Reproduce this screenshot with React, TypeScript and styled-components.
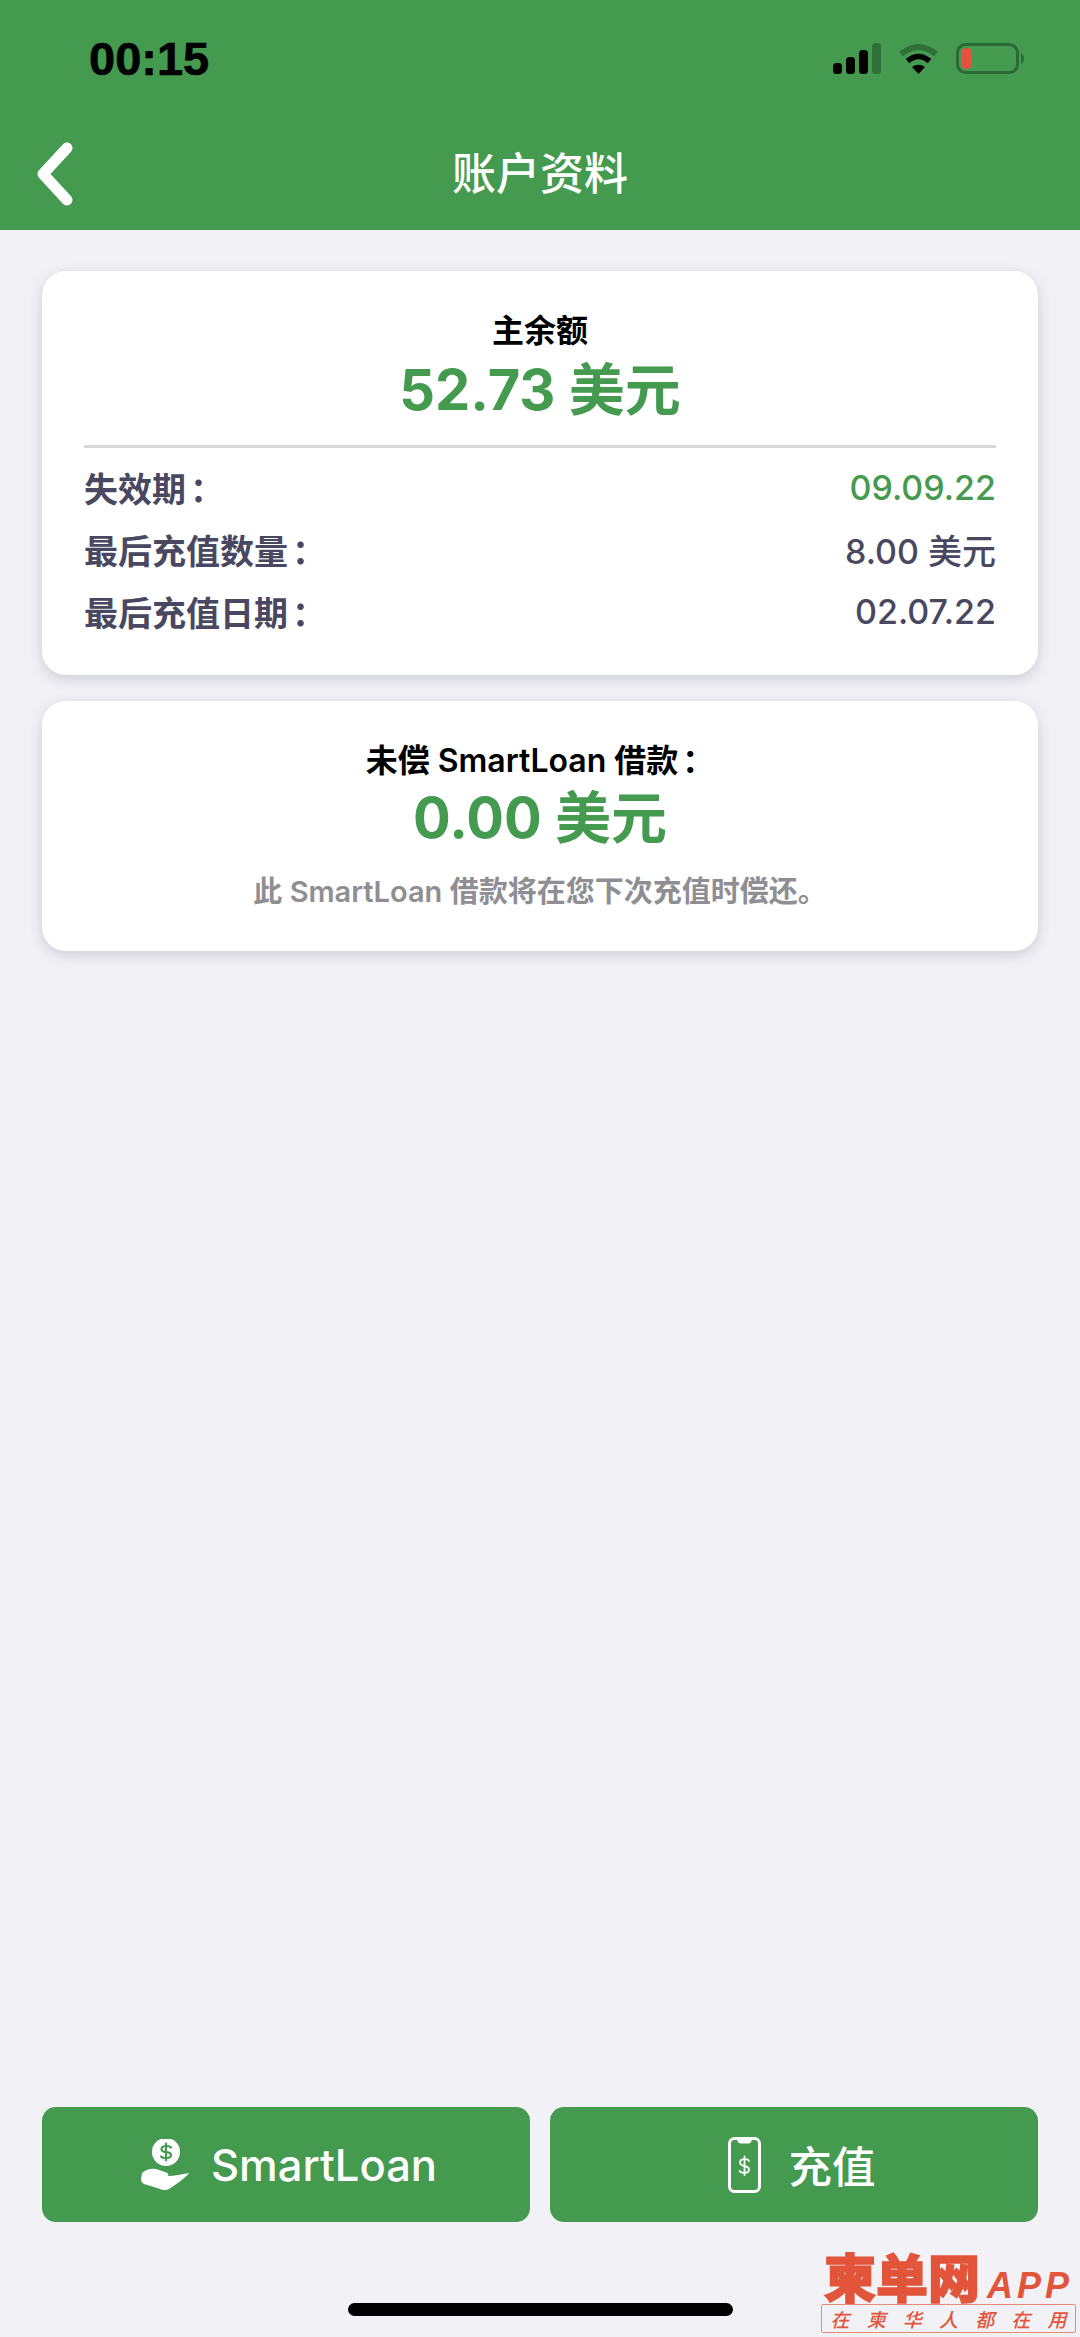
import React from 'react';
import styled, { createGlobalStyle } from 'styled-components';

const GREEN = '#449a4e';
const SLATE = '#4a4860';
const FONT = 'Inter, "Noto Sans CJK SC", sans-serif';

const Global = createGlobalStyle`
  html, body { margin: 0; padding: 0; }
  body { background: #f1f1f6; font-family: ${FONT}; }
  * { box-sizing: border-box; }
`;

const Page = styled.div`
  position: relative;
  width: 1080px;
  height: 2337px;
  display: flex;
  flex-direction: column;
  overflow: hidden;
  background: #f1f1f6;
`;

const Header = styled.header`
  height: 230px;
  background: ${GREEN};
  display: flex;
  flex-direction: column;
`;

const StatusBar = styled.div`
  height: 118px;
  padding: 43px 56px 0 89px;
  display: flex;
  justify-content: space-between;
  align-items: flex-start;
`;

const Clock = styled.span`
  font: 700 47px/32px "Liberation Sans", sans-serif;
  color: #000;
  -webkit-text-stroke: 0.6px #000;
`;

const StatusIcons = styled.div`
  display: flex;
  gap: 17px;
  height: 31px;
`;

const NavBar = styled.div`
  display: grid;
  grid-template-columns: 1fr auto 1fr;
  align-items: center;
  height: 112px;
  padding: 0 35px;
`;

const BackIcon = styled.svg`
  display: block;
  width: 40px;
  height: 64px;
`;

const Title = styled.h1`
  margin: 0;
  font-size: 44px;
  line-height: 56px;
  font-weight: 500;
  color: #fff;
`;

const Main = styled.main`
  flex: 1;
  padding: 41px 42px 0;
  display: flex;
  flex-direction: column;
  gap: 26px;
`;

const Card = styled.section<{ $bottom: number }>`
  background: #fff;
  border-radius: 24px;
  padding: 40px 42px ${p => p.$bottom}px;
  box-shadow: 0 4px 14px rgba(60, 60, 80, 0.2);
  text-align: center;
`;

const CardTitle = styled.div`
  font-size: 32px;
  line-height: 40px;
  font-weight: 600;
  color: #000;
`;

const Amount = styled.div<{ $top: number }>`
  margin-top: ${p => p.$top}px;
  font-size: 56px;
  line-height: 70px;
  font-weight: 700;
  color: ${GREEN};
`;

const Divider = styled.hr`
  margin: 20px 0 8px;
  border: 0;
  height: 3px;
  background: #d9d9dc;
`;

const Row = styled.div`
  display: flex;
  justify-content: space-between;
  align-items: center;
  height: 62px;
  font-size: 34px;
  font-weight: 600;
  color: ${SLATE};
`;

const Colon = styled.span`
  margin-left: 4px;
`;

const RowValue = styled.span<{ $accent?: boolean }>`
  font-weight: 500;
  color: ${p => (p.$accent ? GREEN : SLATE)};
`;

const Note = styled.p`
  margin: 19px 0 0;
  font-size: 29px;
  line-height: 40px;
  font-weight: 600;
  color: #8e8e93;
`;

const Actions = styled.div`
  display: grid;
  grid-template-columns: 1fr 1fr;
  gap: 20px;
  padding: 0 42px;
`;

const ActionButton = styled.button<{ $gap: number; $shift: number }>`
  height: 115px;
  border: 0;
  border-radius: 14px;
  padding: 0 0 0 ${p => p.$shift}px;
  background: ${GREEN};
  color: #fff;
  display: flex;
  align-items: center;
  justify-content: center;
  gap: ${p => p.$gap}px;
  font-family: ${FONT};
  font-size: 43.5px;
  font-weight: 500;
`;

const HomeBar = styled.div`
  width: 385px;
  height: 13px;
  margin: 81px auto 21px;
  border-radius: 7px;
  background: #000;
`;

const Watermark = styled.div`
  position: absolute;
  left: 821px;
  top: 2248px;
  width: 255px;
  color: #e2553a;
`;

const BrandLine = styled.div`
  display: flex;
  align-items: baseline;
  padding-left: 3px;
  height: 56px;
`;

const BrandName = styled.span`
  font: 900 52px/56px "Noto Sans CJK SC", sans-serif;
  -webkit-text-stroke: 1.5px #e2553a;
`;

const BrandApp = styled.span`
  margin-left: 7px;
  font: italic 700 36px/56px "Liberation Sans", sans-serif;
  letter-spacing: 4px;
`;

const Slogan = styled.div`
  height: 29px;
  border: 1px solid #e98b78;
  border-radius: 2px;
  display: flex;
  align-items: center;
  justify-content: space-around;
  font: italic 500 19px/27px "Noto Sans CJK SC", sans-serif;
`;

function SignalIcon() {
  return (
    <svg width="48" height="31" viewBox="0 0 48 31">
      <rect x="0" y="20" width="9" height="11" rx="3.5" fill="#000" />
      <rect x="13" y="14" width="9" height="17" rx="3.5" fill="#000" />
      <rect x="26" y="7" width="9" height="24" rx="3.5" fill="#000" />
      <rect x="39" y="0" width="9" height="31" rx="3.5" fill="#2f7038" />
    </svg>
  );
}

function WifiIcon() {
  return (
    <svg width="41" height="31" viewBox="0 0 41 31">
      <path d="M3 11 Q20.5 -3 38 11" fill="none" stroke="#2f7038" strokeWidth="6" />
      <path d="M9.5 18 Q20.5 9 31.5 18" fill="none" stroke="#000" strokeWidth="5.5" />
      <path d="M14 24 Q20.5 19.5 27 24 L20.5 31 Z" fill="#000" />
    </svg>
  );
}

function BatteryIcon() {
  return (
    <svg width="68" height="31" viewBox="0 0 68 31">
      <rect x="1.5" y="1.5" width="60" height="28" rx="8" fill="none" stroke="#2a6a34" strokeWidth="3" />
      <rect x="5" y="5" width="11" height="21" rx="5" fill="#e8513f" />
      <path d="M65 10 C67 11 68 13 68 15.5 C68 18 67 20 65 21 Z" fill="#2a6a34" />
    </svg>
  );
}

function HandCoinIcon() {
  return (
    <svg width="50" height="52" viewBox="0 0 50 52">
      <circle cx="25" cy="13" r="14" fill="#fff" />
      <path
        d="M30 8.5 C28.5 6.5 20.5 6 20.5 10.2 C20.5 14.8 30 11.5 30 16 C30 20 22 20 20 17.5 M25 4.5 V21.5"
        fill="none"
        stroke={GREEN}
        strokeWidth="2.2"
        strokeLinecap="round"
      />
      <path
        d="M1 34 C5 30 11 29 15 30 L24 33 C27 34 28 35 27 37 C33 37 41 35 48 34 C44 39 36 45 28 50 C25 52 21 51 16 49 L3 45 C1 44 0 42 0 40 Z"
        fill="#fff"
      />
    </svg>
  );
}

function PhoneIcon() {
  return (
    <svg width="33" height="56" viewBox="0 0 33 56">
      <rect x="1.5" y="1.5" width="30" height="53" rx="5" fill="none" stroke="#fff" strokeWidth="3" />
      <path d="M9 2 H24 C23.5 5.5 22 6.5 20 6.5 H13 C11 6.5 9.5 5.5 9 2 Z" fill="#fff" />
      <path
        d="M21 24 C20 21.5 12 21 12 25.5 C12 30.5 21 27.5 21 32.5 C21 37 13 36.5 11.5 34 M16.5 19.5 V38"
        fill="none"
        stroke="#fff"
        strokeWidth="1.8"
        strokeLinecap="round"
      />
    </svg>
  );
}

export default function App() {
  const rows = [
    { label: '失效期', value: '09.09.22', accent: true },
    { label: '最后充值数量', value: '8.00 美元' },
    { label: '最后充值日期', value: '02.07.22' },
  ];

  return (
    <Page>
      <Global />
      <Header>
        <StatusBar>
          <Clock>00:15</Clock>
          <StatusIcons>
            <SignalIcon />
            <WifiIcon />
            <BatteryIcon />
          </StatusIcons>
        </StatusBar>
        <NavBar>
          <BackIcon viewBox="0 0 40 64">
            <path d="M32 6 L8 32 L32 58" fill="none" stroke="#fff" strokeWidth="11" strokeLinecap="round" strokeLinejoin="round" />
          </BackIcon>
          <Title>账户资料</Title>
        </NavBar>
      </Header>

      <Main>
        <Card $bottom={33}>
          <CardTitle>主余额</CardTitle>
          <Amount $top={4}>52.73 美元</Amount>
          <Divider />
          {rows.map(row => (
            <Row key={row.label}>
              <span>{row.label}<Colon>：</Colon></span>
              <RowValue $accent={row.accent}>{row.value}</RowValue>
            </Row>
          ))}
        </Card>
        <Card $bottom={39}>
          <CardTitle>未偿 SmartLoan 借款<Colon>：</Colon></CardTitle>
          <Amount $top={2}>0.00 美元</Amount>
          <Note>此 SmartLoan 借款将在您下次充值时偿还。</Note>
        </Card>
      </Main>

      <Actions>
        <ActionButton $gap={20} $shift={6}>
          <HandCoinIcon />
          SmartLoan
        </ActionButton>
        <ActionButton $gap={28} $shift={15}>
          <PhoneIcon />
          充值
        </ActionButton>
      </Actions>
      <HomeBar />

      <Watermark>
        <BrandLine>
          <BrandName>柬单网</BrandName>
          <BrandApp>APP</BrandApp>
        </BrandLine>
        <Slogan>
          {'在柬华人都在用'.split('').map((ch, i) => (
            <span key={i}>{ch}</span>
          ))}
        </Slogan>
      </Watermark>
    </Page>
  );
}
